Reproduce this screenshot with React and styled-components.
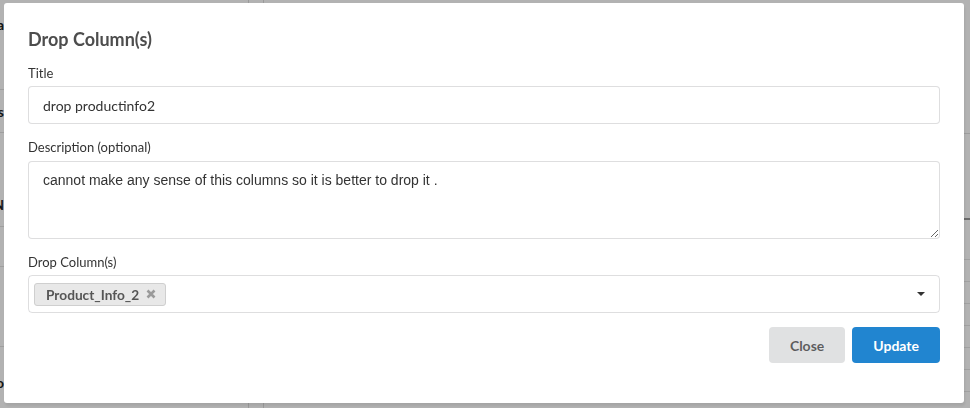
import styled, { createGlobalStyle } from "styled-components";

const GlobalStyle = createGlobalStyle`
  html, body {
    margin: 0;
    padding: 0;
  }

  body {
    font-family: Lato, "Noto Sans", sans-serif;
    background: #fff;
    color: #333;
  }
`;

const sideItems = [
  { label: "a", height: 50 },
  { label: "", height: 40, line: true },
  { label: "s", height: 43, line: true },
  { label: "", height: 50 },
  { label: "N", height: 44, line: true },
  { label: "", height: 40, line: true },
  { label: "", height: 80, line: true },
  { label: "", height: 16 },
  { label: "o", height: 40 },
];

const rows = ["", "", "", "", "", "", ""];

const DropModal = () => {
  return (
    <>
      <GlobalStyle />
      <Page>
        <Sidebar>
          {sideItems.map((item, i) => (
            <SideItem key={i} $height={item.height} $line={item.line}>
              <SideLabel>{item.label}</SideLabel>
            </SideItem>
          ))}
        </Sidebar>
        <Main>
          <MainHeader />
          <MainSection />
          <MainSpacer />
          {rows.map((_, i) => (
            <TableRow key={i} />
          ))}
          <StatRow>
            <StatName>CARDINALITY</StatName>
            <StatValue>2</StatValue>
          </StatRow>
        </Main>
      </Page>

      <Overlay>
        <Modal>
          <Heading>Drop Column(s)</Heading>

          <Field>
            <Label>Title</Label>
            <Input defaultValue="drop productinfo2" />
          </Field>

          <Field>
            <Label $gap={6}>Description (optional)</Label>
            <TextArea defaultValue="cannot make any sense of this columns so it is better to drop it ." />
          </Field>

          <Field $gap={14}>
            <Label>Drop Column(s)</Label>
            <Select>
              <Chip>
                Product_Info_2
                <ChipRemove viewBox="0 0 10 10" aria-hidden="true">
                  <path d="M1.5 1.5 L8.5 8.5 M8.5 1.5 L1.5 8.5" />
                </ChipRemove>
              </Chip>
              <Caret viewBox="0 0 8 4" aria-hidden="true">
                <path d="M0 0 H8 L4 4 Z" />
              </Caret>
            </Select>
          </Field>

          <Actions>
            <Button>Close</Button>
            <Button $primary>Update</Button>
          </Actions>
        </Modal>
      </Overlay>
    </>
  );
};

/* page behind the dimmer */

const Page = styled.div`
  display: flex;
  width: 970px;
  height: 408px;
  overflow: hidden;
  font-size: 14px;
  color: #222;
`;

const Sidebar = styled.div`
  width: 248px;
  flex-shrink: 0;
  display: flex;
  flex-direction: column;
  border-right: 1px solid #ddd;
`;

const SideItem = styled.div`
  height: ${(p) => p.$height}px;
  flex-shrink: 0;
  box-sizing: border-box;
  display: flex;
  align-items: center;
  border-bottom: 1px solid ${(p) => (p.$line ? "#e3e3e3" : "transparent")};
`;

const SideLabel = styled.span`
  width: 4px;
  overflow: hidden;
  direction: rtl;
  font-weight: 700;
  white-space: nowrap;
`;

const Main = styled.div`
  flex: 1;
  display: flex;
  flex-direction: column;
  margin-left: 14px;
  border-left: 1px solid #ddd;
`;

const MainHeader = styled.div`
  height: 133px;
  flex-shrink: 0;
  border-bottom: 1px solid #e0e0e0;
`;

const MainSection = styled.div`
  height: 84px;
  flex-shrink: 0;
  border-bottom: 2px solid #999;
`;

const MainSpacer = styled.div`
  height: 39px;
  flex-shrink: 0;
  border-bottom: 1px solid #e6e6e6;
`;

const TableRow = styled.div`
  height: 21px;
  flex-shrink: 0;
  border-bottom: 1px solid #e6e6e6;
`;

const StatRow = styled.div`
  display: flex;
  height: 20px;
  flex-shrink: 0;
  align-items: flex-end;
  padding-left: 17px;
  font-size: 13px;
`;

const StatName = styled.span`
  width: 413px;
`;

const StatValue = styled.span``;

/* dimmer + modal */

const Overlay = styled.div`
  position: fixed;
  inset: 0;
  display: flex;
  align-items: flex-start;
  padding: 3px 0 0 4px;
  background: rgba(0, 0, 0, 0.3);
`;

const Modal = styled.div`
  width: 960px;
  height: 400px;
  box-sizing: border-box;
  padding: 25px 24px 0 24px;
  background: #fff;
  border-radius: 3px;
  box-shadow: 1px 3px 3px rgba(0, 0, 0, 0.08);
`;

const Heading = styled.h2`
  margin: 0 0 15px;
  font-size: 18px;
  line-height: 22px;
  font-weight: 700;
  color: #4d4d4d;
`;

const Field = styled.div`
  margin-bottom: ${(p) => p.$gap || 15}px;
`;

const Label = styled.label`
  display: block;
  margin-bottom: ${(p) => p.$gap || 5}px;
  font-size: 13px;
  line-height: 16px;
  color: #333;
`;

const Input = styled.input`
  display: block;
  width: 100%;
  height: 38px;
  box-sizing: border-box;
  padding: 0 14px;
  border: 1px solid rgba(34, 36, 38, 0.15);
  border-radius: 4px;
  font-family: Lato, "Noto Sans", sans-serif;
  font-size: 14px;
  color: #333;
  outline: none;
`;

const TextArea = styled.textarea`
  display: block;
  width: 100%;
  height: 78px;
  box-sizing: border-box;
  padding: 9px 14px;
  border: 1px solid rgba(34, 36, 38, 0.15);
  border-radius: 4px;
  font-family: "Liberation Sans", Arial, sans-serif;
  font-size: 14px;
  line-height: 19px;
  color: #333;
  resize: vertical;
  outline: none;
`;

const Select = styled.div`
  display: flex;
  align-items: center;
  height: 38px;
  box-sizing: border-box;
  padding: 0 14px 0 5px;
  border: 1px solid rgba(34, 36, 38, 0.15);
  border-radius: 4px;
`;

const Chip = styled.span`
  display: inline-flex;
  align-items: center;
  gap: 7px;
  height: 23px;
  box-sizing: border-box;
  padding: 0 9px 0 11px;
  background: #e8e8e8;
  border: 1px solid #cfcfcf;
  border-radius: 3px;
  font-size: 13.7px;
  font-weight: 700;
  color: #555;
`;

const ChipRemove = styled.svg`
  width: 10px;
  height: 10px;
  stroke: #9a9a9a;
  stroke-width: 2.6;
  fill: none;
`;

const Caret = styled.svg`
  width: 8px;
  height: 4px;
  margin-left: auto;
  fill: #333;
`;

const Actions = styled.div`
  display: flex;
  justify-content: flex-end;
  gap: 7px;
`;

const Button = styled.button`
  height: 36px;
  padding: 0 21px;
  border: none;
  border-radius: 4px;
  font-family: Lato, "Noto Sans", sans-serif;
  font-size: 14px;
  font-weight: 700;
  background: ${(p) => (p.$primary ? "#2185d0" : "#e0e1e2")};
  color: ${(p) => (p.$primary ? "#fff" : "rgba(0, 0, 0, 0.6)")};
  cursor: pointer;
`;

export default DropModal;
